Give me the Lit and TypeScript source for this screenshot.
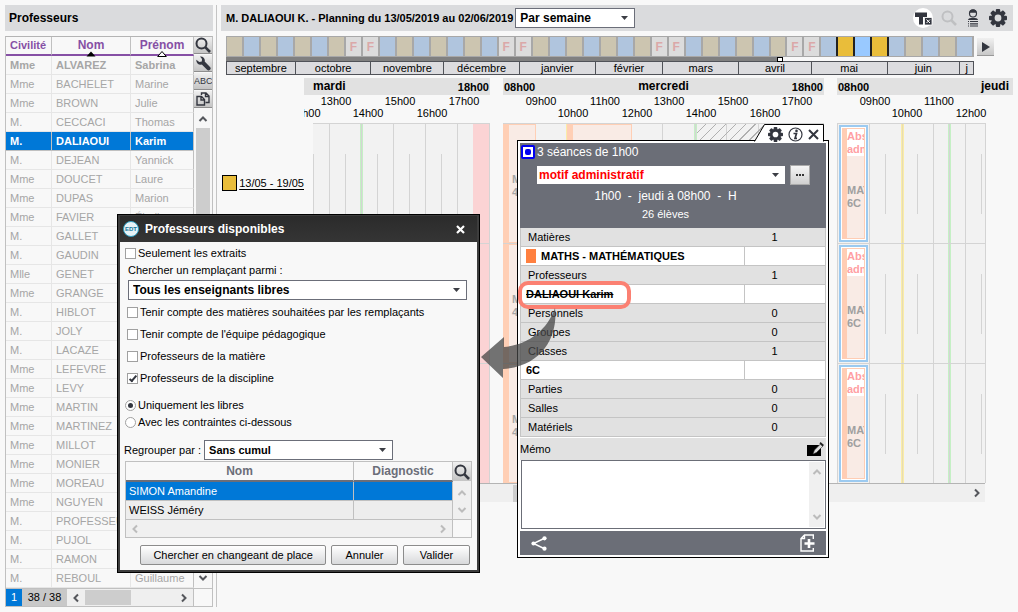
import { LitElement, html, css, svg, nothing } from "lit";
import { customElement } from "lit/decorators.js";
import { classMap } from "lit/directives/class-map.js";

const baseStyles = css`
  *, *::before, *::after { box-sizing: border-box; }
  button, input, select, textarea { font: inherit; color: inherit; margin: 0; }
  button { padding: 0; cursor: pointer; }
  table { border-collapse: separate; border-spacing: 0; table-layout: fixed; width: 100%; }
  th, td { padding: 0; text-align: left; white-space: nowrap; overflow: hidden; }
  svg { display: block; }
  .combo { display: grid; align-items: center; background: #fff; border: 1px solid #6b6e79; height: 20px; }
  .combo > * { grid-area: 1 / 1; }
  .combo select {
    appearance: none; border: 0; background: transparent; width: 100%; height: 18px;
    padding: 0 20px 0 4px; font-weight: bold; font-size: 12px; outline-offset: -2px;
  }
  .combo svg { justify-self: end; margin-right: 6px; pointer-events: none; }
`;

const caret = svg`<svg width="7" height="4" viewBox="0 0 7 4"><path d="M0 0h7L3.5 4z" fill="#3c3e45"/></svg>`;
const searchIcon = (color: string) => html`
  <svg width="16" height="16" viewBox="0 0 16 16" fill="none" stroke=${color}>
    <circle cx="6.5" cy="6.5" r="5" stroke-width="2" />
    <path d="M10.2 10.2L15 15" stroke-width="2.6" />
  </svg>`;
const gearIcon = (size: number, hole: string) => html`
  <svg width=${size} height=${size} viewBox="0 0 18 18">
    <g fill="#33363f">
      ${[0, 45, 90, 135].map((a) => svg`<rect x="6.8" y="0" width="4.4" height="18" rx="1" transform="rotate(${a} 9 9)"/>`)}
      <circle cx="9" cy="9" r="6.8" />
    </g>
    <circle cx="9" cy="9" r="3.4" fill=${hole} />
  </svg>`;
const chevron = (dir: "up" | "down" | "left" | "right", color = "#55575c") => {
  const turn = { up: 0, right: 90, down: 180, left: 270 }[dir];
  return html`<svg width="10" height="10" viewBox="0 0 10 10" fill="none" stroke=${color} stroke-width="2">
    <path d="M1.5 7L5 3.5L8.5 7" transform="rotate(${turn} 5 5)" />
  </svg>`;
};

const TEACHERS: [string, string, string][] = [
  ["Mme", "ALVAREZ", "Sabrina"], ["Mme", "BACHELET", "Marine"], ["Mme", "BROWN", "Julie"],
  ["M.", "CECCACI", "Thomas"], ["M.", "DALIAOUI", "Karim"], ["M.", "DEJEAN", "Yannick"],
  ["Mme", "DOUCET", "Laure"], ["Mme", "DUPAS", "Marion"], ["Mme", "FAVIER", "Élodie"],
  ["M.", "GALLET", ""], ["M.", "GAUDIN", ""], ["Mlle", "GENET", ""], ["Mme", "GRANGE", ""],
  ["M.", "HIBLOT", ""], ["M.", "JOLY", ""], ["M.", "LACAZE", ""], ["Mme", "LEFEVRE", ""],
  ["Mme", "LEVY", ""], ["Mme", "MARTIN", ""], ["Mme", "MARTINEZ", ""], ["Mme", "MILLOT", ""],
  ["Mme", "MONIER", ""], ["Mme", "MOREAU", ""], ["Mme", "NGUYEN", ""], ["M.", "PROFESSEUR", ""],
  ["M.", "PUJOL", ""], ["M.", "RAMON", ""], ["M.", "REBOUL", "Guillaume"],
];

@customElement("teacher-list")
class TeacherList extends LitElement {
  static styles = [baseStyles, css`
    :host { display: flex; flex-direction: column; gap: 5px; }
    .title { margin: 0; height: 26px; line-height: 26px; padding-left: 4px; background: #dadbdd; font-size: 12px; }
    .frame { border: 1px solid #c0c0c0; border-top-color: #b4b4b4; }
    .body { display: grid; grid-template-columns: minmax(0, 1fr) 18px; }
    .civ { width: 46px; }
    .nom { width: 79px; }
    th { height: 19px; color: #8650a5; font-size: 12px; text-align: center; border-bottom: 2px solid #8650a5;
      border-right: 1px solid #c0c0c0; position: relative; overflow: visible; line-height: 17px; }
    th:first-child { text-align: left; padding-left: 4px; font-size: 11px; }
    .sort { position: absolute; left: 50%; bottom: -3px; margin-left: -5px; }
    td { height: 19px; line-height: 18px; padding-left: 4px; color: #a6a6a6;
      border-bottom: 1px solid #e6e6e6; border-right: 1px solid #e6e6e6; }
    td:last-child { border-right-color: #c0c0c0; }
    .mine td { font-weight: bold; }
    .current td { background: #0078d7; color: #fff; font-weight: bold; border-bottom-color: #c0c0c0; border-right-color: #c0c0c0; }
    .side { display: flex; flex-direction: column; }
    .tool { height: 17px; display: grid; place-items: center; border: 0; border-bottom: 1px solid #8e8e8e;
      background: linear-gradient(#f0f0f0, #c4c4c4); margin-bottom: 1px; font-size: 9px; color: #33363f; overflow: hidden; }
    .track { flex: 1; display: flex; flex-direction: column; align-items: center; background: #f7f7f7; padding: 5px 0; gap: 4px; }
    .thumb { flex: 1; width: 14px; background: #cdcdcd; }
    .foot { display: grid; grid-template-columns: 16px 45px minmax(0, 1fr) 18px; height: 18px; line-height: 16px;
      border-top: 1px solid #c0c0c0; }
    .page { background: #0078d7; color: #fff; text-align: center; }
    .count { background: #c8c8c8; text-align: center; }
    .hbar { display: flex; align-items: center; gap: 4px; padding: 0 4px; background: #efefef; border-right: 1px solid #c0c0c0; }
    .hthumb { width: 46px; height: 15px; background: #cdcdcd; margin-right: auto; }
  `];

  render() {
    return html`
      <h2 class="title">Professeurs</h2>
      <div class="frame">
        <div class="body">
          <table>
            <thead>
              <tr>
                <th class="civ">Civilité</th>
                <th class="nom">Nom
                  <svg class="sort" width="10" height="6" viewBox="0 0 10 6"><path d="M5 .5L9.5 5.5h-9z" fill="#000" /></svg>
                </th>
                <th>Prénom
                  <svg class="sort" width="10" height="6" viewBox="0 0 10 6"><path d="M5 .5L9.3 5.5H.7z" fill="#fff" stroke="#000" /></svg>
                </th>
              </tr>
            </thead>
            <tbody>
              ${TEACHERS.map((row, i) => html`
                <tr class=${classMap({ mine: i === 0, current: i === 4 })}>${row.map((c) => html`<td>${c}</td>`)}</tr>`)}
            </tbody>
          </table>
          <div class="side">
            <button class="tool" aria-label="Rechercher">${searchIcon("#33363f")}</button>
            <button class="tool" aria-label="Outils">
              <svg width="16" height="16" viewBox="0 0 16 16"><path d="M5 1.500C8 1 10.500 3.500 9.700 6.600L15 11.900a2 2 0 0 1-2.900 2.900L6.800 9.500C4 10.500 1 8 1.300 4.800L4.300 7 6.800 6.500 7 4z" fill="#33363f" /></svg>
            </button>
            <button class="tool">ABC</button>
            <button class="tool" aria-label="Copier">
              <svg width="14" height="14" viewBox="0 0 14 14" fill="none" stroke="#33363f" stroke-width="1.400">
                <path d="M5.500 3V1h4.500l3 3v6.500H9.500M9.500 1v3.500H13" /><path d="M1 4.500h4.500l3 3V13H1zM5 4.500v3.500h3.500" />
              </svg>
            </button>
            <div class="track">${chevron("up")}<div class="thumb"></div>${chevron("down")}</div>
          </div>
        </div>
        <div class="foot">
          <span class="page">1</span><span class="count">38 / 38</span>
          <div class="hbar">${chevron("left")}<div class="hthumb"></div>${chevron("right")}</div>
        </div>
      </div>`;
  }
}

const WEEKS = "TBTBTBTFFBTBTBTBFFTBTBTBTFFBTBTBTFFEGSGBTBTB".split("");
const WEEK_CLASS: Record<string, string> = { T: "tan", B: "blue", E: "blue edge", F: "off", G: "gold", S: "sky" };
const MONTHS: [string, number][] = [
  ["septembre", 69], ["octobre", 76], ["novembre", 73], ["décembre", 76], ["janvier", 76], ["février", 68],
  ["mars", 76], ["avril", 73], ["mai", 76], ["juin", 73], ["j", 13],
];

@customElement("week-planning")
class WeekPlanning extends LitElement {
  static styles = [baseStyles, css`
    :host { display: flex; flex-direction: column; gap: 5px; min-width: 0; }
    .bar { display: flex; align-items: center; gap: 2px; height: 26px; padding: 0 6px 0 5px; background: #dadbdd; }
    .title { margin: 0; font-size: 11px; white-space: nowrap; }
    .period { width: 120px; }
    .tools { margin-left: auto; display: flex; align-items: center; gap: 8px; }
    .tools button { border: 0; background: none; }
    .year { display: grid; grid-template-columns: minmax(0, 1fr) 17px; gap: 3px; padding: 0 19px 0 5px; align-items: start; }
    .weeks { display: flex; height: 21px; border: 1px solid #a8a8a8; border-right: 0; }
    .week { flex: 1; border-right: 2px solid #a8a8a8; line-height: 20px; text-align: center; font-weight: bold; font-size: 12px; color: #dba8a8; }
    .tan { background: #ccc5b0; }
    .blue { background: #b0c5de; }
    .off { background: #dcdcdc; }
    .edge { border-color: #222; }
    .gold { background: #e9bd3a; border-color: #222; }
    .sky { background: #99c9ff; border-color: #222; }
    .progress { width: 74.4%; height: 4px; background: #808080; display: flex; justify-content: flex-end; }
    .knob { width: 6px; height: 5px; border: 1px solid #000; background: #fff; }
    .months { display: flex; height: 14px; border: 1px solid #505258; background: #dcdcdf; }
    .month { line-height: 13px; text-align: center; border-right: 1px solid #505258; overflow: hidden; flex-basis: 0; min-width: 0; }
    .month:last-child { border-right: 0; }
    .next { height: 18px; margin-top: 2px; border: 0; border-bottom: 1px solid #999; background: linear-gradient(#f0f0f0, #c8c8c8); display: grid; place-items: center; }
    .board { display: grid; grid-template-columns: 83px minmax(0, 1fr); margin-top: -2px; }
    .labels { padding-top: 45px; }
    .wk { height: 120px; display: flex; align-items: center; gap: 2px; padding-left: 1px; }
    .swatch { width: 16px; height: 16px; background: #e9bd3a; border: 1px solid #000; }
    .wk a { color: #000; text-decoration: underline; text-underline-offset: 2px; white-space: nowrap; }
    .days { display: flex; gap: 13px; overflow: hidden; }
    .day { flex: none; width: 321px; }
    .day.first { width: 186px; }
    .day.last { flex: 1; width: auto; min-width: 0; }
    .head { display: flex; justify-content: space-between; height: 17px; line-height: 18px; background: #e1e1e1; font-weight: bold; padding: 0 1px; }
    .name { font-size: 12px; line-height: 17px; }
    .first .name { padding-left: 8px; }
    .last .name { padding-right: 3px; }
    .hours { display: flex; height: 28px; padding-left: 22px; line-height: 12px; overflow: hidden; }
    .hour { flex: none; width: 32px; text-align: center; white-space: nowrap; }
    .hour.low { padding-top: 12px; }
    .first .hours { padding-left: 0; }
    .first .hour.low:first-child { width: 30px; margin-left: -14px; }
    .week-row { position: relative; height: 120px; border-top: 1px solid #d4d4d4; border-right: 1px solid #d4d4d4; background: #f2f2f2; display: flex; overflow: hidden; }
    .first .week-row { margin-left: 9px; }
    .last .week-row { width: 149px; border-left: 1px solid #d4d4d4; }
    .slot { flex: none; width: 32px; border-right: 1px solid #d4d4d4; display: flex; align-items: flex-end; padding: 0 0 29px 15px; }
    .slot::before { content: ""; width: 1px; height: 60px; background: #d4d4d4; }
    .slot.half { width: 17px; padding-left: 0; }
    .mark { position: absolute; top: 0; bottom: 0; width: 3px; }
    .green { background: linear-gradient(90deg, #c5f0c5 1px, #d4d4d4 1px 2px, #c5f0c5 2px); }
    .yellow { background: linear-gradient(90deg, #faeca8 1px, #e6dcb4 1px 2px, #faeca8 2px); }
    .pink { position: absolute; top: 0; right: 0; bottom: 0; width: 16px; background: #fbd3d4; }
    .course { position: absolute; top: 0; bottom: 0; background: #f9ebe5; border: 1px solid #ffcfb5; border-left-width: 6px;
      font-weight: bold; color: #a6a6a6; line-height: 13px; overflow: hidden; padding: 48px 0 0 3px; }
    .hatch { position: absolute; top: 0; bottom: 0; width: 75px;
      background: repeating-linear-gradient(135deg, transparent 0 6px, #b0b0b0 6px 7px); }
    .absence { position: absolute; left: 1px; top: 1px; bottom: 1px; width: 29px; border: 2px solid #9ccaf0; background: #fff; padding: 1px; }
    .lesson { height: 100%; border: 1px solid #ffcdb4; border-left-width: 5px; background: #f9ebe5; overflow: hidden;
      font-weight: bold; line-height: 13px; color: #a0a0a0; }
    .why { background: #fff; color: #ff9fa3; height: 27px; padding-top: 1px; margin-bottom: 28px; }
    .mardi { left: 47px; }
    .wed-a, .thu-a { left: 63px; }
    .wed-b { left: 191px; }
    .thu-b { left: 110px; }
    .c1 { left: 0; width: 33px; }
    .c2 { left: 64px; width: 65px; }
    .hatch { left: 194px; }
    .hscroll { display: flex; justify-content: space-between; align-items: center; height: 19px; margin: 0 28px 0 0;
      background: #efefef; border-top: 1px solid #b4b4b4; padding-right: 3px; }
    .hthumb { width: 230px; height: 17px; margin-left: 209px; background: #cdcdcd; }
  `];

  private hours(from: number, to: number) {
    const list: number[] = [];
    for (let h = from; h <= to; h++) list.push(h);
    return list.map((h) => html`<span class=${classMap({ hour: true, low: h % 2 === 0 })}>${String(h).padStart(2, "0")}h00</span>`);
  }

  private slots(n: number) {
    return Array.from({ length: n }, () => html`<i class="slot"></i>`);
  }

  render() {
    const rows = [0, 1, 2];
    return html`
      <div class="bar">
        <h2 class="title">M. DALIAOUI K. - Planning du 13/05/2019 au 02/06/2019</h2>
        <span class="combo period"><select aria-label="Période"><option>Par semaine</option></select>${caret}</span>
        <div class="tools">
          <button aria-label="Texte">
            <svg width="20" height="20" viewBox="0 0 20 20"><circle cx="10" cy="10" r="10" fill="#fff" />
              <path d="M2 4.500h12v4.500H10v7.500H6V9H2z" fill="#33363f" /><path d="M11.500 9.500h7.500v7.500h-7.500z" fill="#33363f" stroke="#fff" stroke-width=".8" />
              <path d="M13.500 11.500l3.500 3.500m0-3.500l-3.500 3.500" stroke="#fff" /></svg>
          </button>
          <button aria-label="Rechercher">${searchIcon("#bfc0c2")}</button>
          <button aria-label="Élève">
            <svg width="16" height="18" viewBox="0 0 16 18"><circle cx="8" cy="4.500" r="3.500" fill="none" stroke="#33363f" stroke-width="1.200" />
              <path d="M4.500 3.800a3.500 3.500 0 0 1 7 0z" fill="#33363f" /><path d="M3 11c0-3 10-3 10 0z" fill="#33363f" />
              <path d="M5 12.500h8M5 14.800h8M5 17h8" stroke="#33363f" stroke-width="1.200" /><path d="M3 12.500h1M3 14.800h1M3 17h1" stroke="#33363f" /></svg>
          </button>
          <button aria-label="Paramètres">${gearIcon(18, "#dadbdd")}</button>
        </div>
      </div>
      <div class="year">
        <div>
          <div class="weeks">${WEEKS.map((w) => html`<span class="week ${WEEK_CLASS[w]}">${w === "F" ? "F" : nothing}</span>`)}</div>
          <div class="progress"><span class="knob"></span></div>
          <div class="months">${MONTHS.map(([m, w]) => html`<span class="month" style="flex-grow:${w}">${m}</span>`)}</div>
        </div>
        <button class="next" aria-label="Suivant"><svg width="8" height="10" viewBox="0 0 8 10"><path d="M0 0l8 5-8 5z" fill="#33363f" /></svg></button>
      </div>
      <div class="board">
        <div class="labels"><div class="wk"><span class="swatch"></span><a href="#semaine">13/05 - 19/05</a></div></div>
        <div>
          <div class="days">
            <section class="day first">
              <div class="head"><span class="name">mardi</span><span>18h00</span></div>
              <div class="hours">${this.hours(12, 17)}</div>
              ${rows.map(() => html`<div class="week-row"><i class="slot half"></i>${this.slots(5)}
                <i class="mark green mardi"></i><i class="pink"></i></div>`)}
            </section>
            <section class="day">
              <div class="head"><span>08h00</span><span class="name">mercredi</span><span>18h00</span></div>
              <div class="hours">${this.hours(9, 17)}</div>
              ${rows.map(() => html`<div class="week-row">${this.slots(10)}
                <i class="mark yellow wed-a"></i><i class="mark green wed-b"></i>
                <div class="course c1">MATHS<br />4A</div><div class="course c2"></div><i class="hatch"></i></div>`)}
            </section>
            <section class="day last">
              <div class="head"><span>08h00</span><span class="name">jeudi</span></div>
              <div class="hours">${this.hours(9, 12)}</div>
              ${rows.map(() => html`<div class="week-row">${this.slots(5)}
                <i class="mark yellow thu-a"></i><i class="mark green thu-b"></i>
                <div class="absence"><div class="lesson"><div class="why">Abs.<br />adm.</div>MATHS<br />6C</div></div></div>`)}
            </section>
          </div>
          <div class="hscroll"><span class="hthumb"></span>${chevron("right")}</div>
        </div>
      </div>`;
  }
}

type Res = { label: string; count?: number; tagged?: boolean; struck?: boolean };
const RESOURCES: Res[] = [
  { label: "Matières", count: 1 }, { label: "MATHS - MATHÉMATIQUES", tagged: true },
  { label: "Professeurs", count: 1 }, { label: "DALIAOUI Karim", struck: true },
  { label: "Personnels", count: 0 }, { label: "Groupes", count: 0 }, { label: "Classes", count: 1 },
  { label: "6C" }, { label: "Parties", count: 0 }, { label: "Salles", count: 0 }, { label: "Matériels", count: 0 },
];

@customElement("session-card")
class SessionCard extends LitElement {
  static styles = [baseStyles, css`
    :host { display: block; }
    .tab { margin: 0 3px -1px auto; position: relative; width: 76px; height: 17px; }
    .shape { position: absolute; inset: 0 auto auto 0; }
    .acts { position: relative; display: flex; justify-content: flex-end; align-items: center; gap: 5px; height: 18px; padding: 2px 7px 0 0; }
    .acts button { border: 0; background: none; }
    .box { border: 1px solid #000; background: #fff; padding: 2px; display: flex; flex-direction: column; }
    .top { background: #6b6e77; color: #fff; padding: 2px 16px 5px 1px; }
    .line { display: flex; align-items: center; gap: 2px; font-size: 12px; height: 14px; }
    .pin { width: 14px; height: 14px; border: 2px solid #0000f0; background: #fff; border-radius: 2px; display: grid; place-items: center; }
    .pin::before { content: ""; width: 6px; height: 6px; border-radius: 2px; background: #0000f0; }
    .motif { display: grid; grid-template-columns: minmax(0, 1fr) 20px; gap: 5px; padding: 6px 0 2px 16px; }
    .motif .combo { border: 0; height: 18px; margin-top: 1px; }
    .motif select { color: #f00; padding-left: 2px; }
    .more { height: 20px; border: 1px solid #aaa; background: linear-gradient(#f5f5f5, #d0d0d0); }
    .when { font-size: 12px; text-align: center; line-height: 18px; }
    .pupils { text-align: center; line-height: 18px; }
    td { height: 19px; line-height: 18px; border: 0 solid #c4c4c4; border-bottom-width: 1px; }
    td:first-child { border-left-width: 1px; }
    td:last-child { border-right-width: 1px; }
    .sum td { background: #e1e1e1; padding-left: 7px; }
    .sum td:last-child { text-align: center; padding: 0 20px 0 0; }
    .item td { background: #fff; font-weight: bold; padding-left: 5px; }
    .item td:last-child { border-left-width: 1px; }
    .tagged { display: flex; align-items: center; gap: 5px; height: 18px; }
    .chip { width: 10px; height: 14px; background: #ff8040; }
    .struck { text-decoration: line-through; }
    .memo { display: flex; align-items: center; justify-content: space-between; height: 22px; background: #e1e1e1; padding-right: 2px; margin-top: 1px; }
    .pad { display: grid; grid-template-columns: minmax(0, 1fr) 16px; border: 1px solid #6b6e77; margin-left: 1px; height: 69px; }
    textarea { border: 0; resize: none; padding: 2px; background: #fff; width: 100%; height: 100%; outline: 0; }
    .scroll { display: flex; flex-direction: column; justify-content: space-between; align-items: center; background: #f0f0f0; margin: 1px 1px 1px 0; padding: 5px 0; }
    .foot { display: flex; justify-content: space-between; align-items: center; height: 24px; margin-top: 2px; padding: 0 11px; background: #6b6e77; }
    .foot button { border: 0; background: none; }
  `];

  render() {
    return html`
      <div class="tab">
        <svg class="shape" width="76" height="18" viewBox="0 0 76 18"><path d="M4.500 17.500L14.500 .5H73.500V17.500" fill="#fff" stroke="#000" /></svg>
        <div class="acts">
          <button aria-label="Paramètres">${gearIcon(15, "#fff")}</button>
          <button aria-label="Informations"><svg width="15" height="15" viewBox="0 0 15 15"><circle cx="7.500" cy="7.500" r="6.500" fill="none" stroke="#33363f" stroke-width="1.200" />
            <circle cx="8.500" cy="3.900" r="1.300" fill="#33363f" /><path d="M5.500 6.500h3L7 11.300h2" fill="none" stroke="#33363f" stroke-width="1.700" /></svg></button>
          <button aria-label="Fermer"><svg width="11" height="11" viewBox="0 0 11 11"><path d="M1 1l9 9M10 1l-9 9" stroke="#33363f" stroke-width="2" /></svg></button>
        </div>
      </div>
      <div class="box">
        <div class="top">
          <div class="line"><span class="pin"></span>3 séances de 1h00</div>
          <div class="motif">
            <span class="combo"><select aria-label="Motif"><option>motif administratif</option></select>${caret}</span>
            <button class="more" aria-label="Choisir un motif">
              <svg width="18" height="4" viewBox="0 0 18 4"><path d="M5 1h2v2H5zM8 1h2v2H8zM11 1h2v2h-2z" fill="#333" /></svg></button>
          </div>
          <div class="when">1h00 &nbsp;-&nbsp; jeudi à 08h00 &nbsp;-&nbsp; H</div>
          <div class="pupils">26 élèves</div>
        </div>
        <table>
          <colgroup><col /><col width="82" /></colgroup>
          <tbody>
            ${RESOURCES.map((r) => r.count === undefined
              ? html`<tr class="item"><td>${r.tagged
                  ? html`<span class="tagged"><span class="chip"></span>${r.label}</span>`
                  : html`<span class=${classMap({ struck: !!r.struck })}>${r.label}</span>`}</td><td></td></tr>`
              : html`<tr class="sum"><td>${r.label}</td><td>${r.count}</td></tr>`)}
          </tbody>
        </table>
        <div class="memo"><label for="memo">Mémo</label>
          <svg width="18" height="15" viewBox="0 0 18 15"><path d="M1 3h14v11H1z" fill="#000" /><path d="M7 12l1.500-4L14.500 2l2.500 2-6.500 6.500z" fill="#ddd" stroke="#333" stroke-width=".6" /><path d="M14.500 0l3.500 3-1.500 1.500-3-3z" fill="#222" /></svg>
        </div>
        <div class="pad"><textarea id="memo"></textarea><div class="scroll">${chevron("up", "#bcbcbc")}${chevron("down", "#bcbcbc")}</div></div>
        <div class="foot">
          <button aria-label="Partager"><svg width="16" height="15" viewBox="0 0 16 15"><path d="M14 2L2.500 7.500L14 13" fill="none" stroke="#fff" stroke-width="1.400" />
            <g fill="#fff"><circle cx="13.500" cy="2.300" r="2.100" /><circle cx="2.500" cy="7.500" r="2.100" /><circle cx="13.500" cy="12.700" r="2.100" /></g></svg></button>
          <button aria-label="Ajouter"><svg width="15" height="18" viewBox="0 0 15 18"><path d="M13.300 5V1H4.500L1 4.500V17h12.300v-3M4.500 1v3.500H1" fill="none" stroke="#fff" stroke-width="1.400" />
            <path d="M9 5v9M4.500 9.500h10" stroke="#fff" stroke-width="2.600" /></svg></button>
        </div>
      </div>`;
  }
}

@customElement("available-dialog")
class AvailableDialog extends LitElement {
  static styles = [baseStyles, css`
    :host { display: block; border: 1px solid #000; box-sizing: border-box; }
    .win { border: 2px solid #3d3d3d; border-top-width: 1px; background: #f8f8f8; }
    .head { display: flex; align-items: center; gap: 6px; height: 26px; padding: 0 12px 0 3px; color: #fff; background: linear-gradient(#2b2b2b, #353535); }
    .logo { width: 16px; height: 16px; border-radius: 50%; background: #e6f2f7; border: 1px solid #2c9cc0; color: #14779a; font-size: 6px; font-weight: bold; line-height: 14px; text-align: center; }
    .head h2 { margin: 0 auto 0 0; font-size: 12px; }
    .head button { border: 0; background: none; }
    .body { padding: 5px 5px 5px 5px; }
    .opt { display: flex; align-items: center; gap: 2px; height: 13px; line-height: 13px; }
    .opts { display: flex; flex-direction: column; gap: 9px; padding: 6px 0 0 2px; }
    .radios { display: flex; flex-direction: column; gap: 4px; margin-top: 14px; }
    .lead { display: block; margin: 3px 0 3px 3px; line-height: 14px; }
    .among { margin: 0 5px 0 3px; }
    input { appearance: none; width: 11px; height: 11px; border: 1px solid #a0a0a0; background: #fff; display: grid; place-items: center; }
    input[type="radio"] { border-radius: 50%; }
    input[type="radio"]:checked::before { content: ""; width: 5px; height: 5px; border-radius: 50%; background: #33363f; }
    input[type="checkbox"]:checked::before { content: ""; width: 8px; height: 4px; border: solid #33363f; border-width: 0 0 2px 2px; rotate: -50deg; translate: 0 -1px; }
    .group { display: flex; align-items: center; gap: 3px; height: 20px; margin: 11px 0 1px -1px; white-space: nowrap; }
    .group .combo { width: 189px; }
    .group select { font-size: 11px; }
    .grid { display: grid; grid-template-columns: minmax(0, 1fr) 18px; border: 1px solid #c0c0c0; }
    th { height: 20px; text-align: center; font-size: 12px; color: #6b6e79; border-bottom: 2px solid #6b6e79; border-right: 1px solid #c0c0c0; }
    td { height: 19px; line-height: 17px; padding-left: 3px; background: #ededed; border-right: 1px solid #c0c0c0; border-bottom: 1px solid #c0c0c0; }
    .on td { background: #0078d7; color: #fff; }
    .side { display: flex; flex-direction: column; align-items: center; background: #f0f0f0; border-bottom: 1px solid #c0c0c0; justify-content: space-between; padding-bottom: 4px; }
    .find { width: 18px; height: 19px; border: 0; background: linear-gradient(#f0f0f0, #c4c4c4); display: grid; place-items: center; }
    .hbar { display: flex; justify-content: space-between; align-items: center; height: 17px; padding: 0 4px; background: #f0f0f0; border-right: 1px solid #c0c0c0; }
    .btns { display: flex; justify-content: flex-end; gap: 5px; margin: 7px 2px 0 0; }
    .btns button { min-width: 67px; height: 20px; padding: 0 12px; border: 1px solid #8c8c8c; border-radius: 2px; background: linear-gradient(#fff, #d8d9db); white-space: nowrap; }
  `];

  private check(label: string, checked = false) {
    return html`<label class="opt"><input type="checkbox" ?checked=${checked} />${label}</label>`;
  }

  render() {
    return html`<div class="win" role="dialog" aria-label="Professeurs disponibles">
      <div class="head"><span class="logo">EDT</span><h2>Professeurs disponibles</h2>
        <button aria-label="Fermer"><svg width="9" height="9" viewBox="0 0 9 9"><path d="M1 1l7 7M8 1l-7 7" stroke="#fff" stroke-width="2.200" /></svg></button>
      </div>
      <div class="body">
        ${this.check("Seulement les extraits")}
        <label class="lead" for="among">Chercher un remplaçant parmi :</label>
        <div class="combo among"><select id="among"><option>Tous les enseignants libres</option></select>${caret}</div>
        <div class="opts">
          ${this.check("Tenir compte des matières souhaitées par les remplaçants")}
          ${this.check("Tenir compte de l'équipe pédagogique")}
          ${this.check("Professeurs de la matière")}
          ${this.check("Professeurs de la discipline", true)}
        </div>
        <div class="radios">
          <label class="opt"><input type="radio" name="mode" checked />Uniquement les libres</label>
          <label class="opt"><input type="radio" name="mode" />Avec les contraintes ci-dessous</label>
        </div>
        <div class="group"><label for="group">Regrouper par :</label>
          <span class="combo"><select id="group"><option>Sans cumul</option></select>${caret}</span></div>
        <div class="grid">
          <table>
            <colgroup><col /><col width="99" /></colgroup>
            <thead><tr><th>Nom</th><th>Diagnostic</th></tr></thead>
            <tbody><tr class="on"><td>SIMON Amandine</td><td></td></tr><tr><td>WEISS Jéméry</td><td></td></tr></tbody>
          </table>
          <div class="side"><button class="find" aria-label="Rechercher">${searchIcon("#33363f")}</button>${chevron("up", "#bcbcbc")}${chevron("down", "#bcbcbc")}</div>
          <div class="hbar">${chevron("left", "#bcbcbc")}${chevron("right", "#bcbcbc")}</div>
        </div>
        <div class="btns"><button>Chercher en changeant de place</button><button>Annuler</button><button>Valider</button></div>
      </div>
    </div>`;
  }
}

@customElement("app-root")
class AppRoot extends LitElement {
  static styles = css`
    :host { display: block; position: relative; min-height: 100vh; overflow: hidden; background: #f8f8f8; color: #000;
      font: 11px/13px "Liberation Sans", Arial, sans-serif; box-sizing: border-box; padding: 5px; }
    .page { display: grid; grid-template-columns: 208px minmax(0, 1fr); gap: 8px; }
    .main { border-left: 1px solid #c4c4c4; padding-left: 4px; margin-left: -5px; min-width: 0; display: grid; align-content: start; }
    .card { position: absolute; left: 517px; top: 124px; width: 312px; }
    .dialog { position: absolute; left: 117px; top: 214px; width: 363px; }
    .ring { position: absolute; left: 518px; top: 281px; width: 113px; height: 28px; box-sizing: border-box; border: 4px solid #fb8072; border-radius: 10px; }
    .arrow { position: absolute; left: 481px; top: 307px; }
  `;

  render() {
    return html`
      <div class="page">
        <teacher-list></teacher-list>
        <main class="main"><week-planning></week-planning></main>
      </div>
      <session-card class="card"></session-card>
      <available-dialog class="dialog"></available-dialog>
      <span class="ring"></span>
      <svg class="arrow" width="76" height="73" viewBox="0 0 76 73">
        <path d="M0 50L23 30V40C46 38 66 24 74 1C77 26 64 59 22 62V71z" fill="#464646" fill-opacity=".75" />
      </svg>`;
  }
}
